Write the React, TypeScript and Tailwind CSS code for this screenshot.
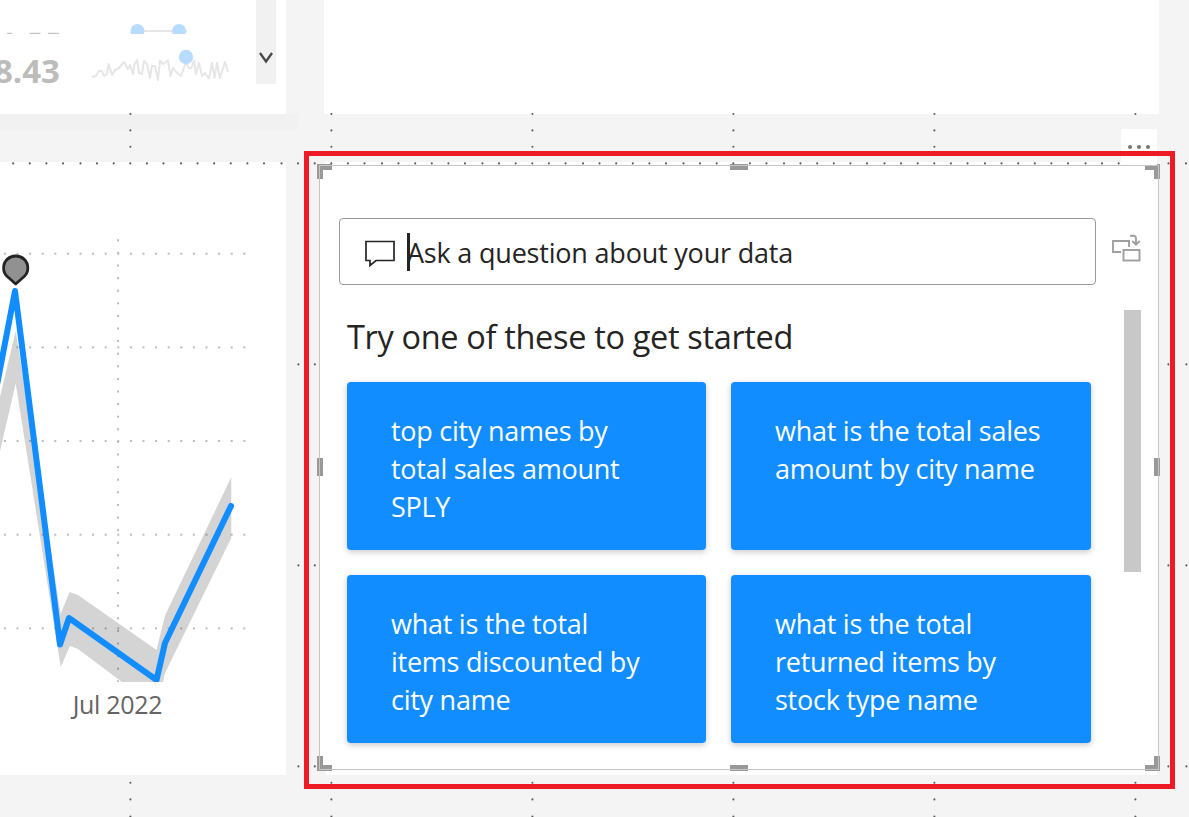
import React from "react";

const gridStops = [0, 16.5, 33.2, 49.8, 66.4, 83];
const guideXs: number[] = [];
for (let k = -1; k < 12; k++) {
  for (const s of gridStops) guideXs.push(80.5 + k * 100.5 + s);
}
const columnXs = [130.4, 331.4, 532.4, 733.4, 934.4, 1135.4];
const columnYs = [114, 130.4, 146.8, 782.8, 799.4, 816.6];
const rowYs = [364.4, 565.4, 766.4];
const rowXs = [298.4, 314.8, 1168.4, 1186.4];

function Dot({ x, y }: { x: number; y: number }) {
  return <circle cx={x} cy={y} r="1.05" fill="#5c5c5c" />;
}

function SnapGrid() {
  return (
    <svg className="pointer-events-none absolute inset-0" width="1189" height="817">
      {guideXs
        .filter((x) => x < 1125 || x > 1160)
        .map((x) => (
          <Dot key={x} x={x} y={163.4} />
        ))}
      {columnXs.map((x) => columnYs.map((y) => <Dot key={`${x}-${y}`} x={x} y={y} />))}
      {rowYs.map((y) => rowXs.map((x) => <Dot key={`${x}-${y}`} x={x} y={y} />))}
    </svg>
  );
}

function KpiCard() {
  return (
    <section className="flex h-[114px] w-[286px] justify-between overflow-hidden bg-white pr-[10px]">
      <div className="flex w-[60px] flex-col items-end">
        <svg className="h-[34px] w-[60px] shrink-0" viewBox="0 0 60 34" fill="#c4c3c2">
          <rect x="7" y="32.8" width="5" height="1.2" />
          <rect x="29.5" y="32.8" width="11" height="1.2" />
          <rect x="48" y="32.8" width="11" height="1.2" />
        </svg>
        <span className="mt-[13px] text-[33px] leading-[48px] font-bold text-[#bdbcbb]">8.43</span>
      </div>
      <svg className="h-[84px] w-[150px]" viewBox="83 0 150 84" fill="none">
        <clipPath id="row">
          <rect x="85" y="0" width="150" height="34" />
        </clipPath>
        <g clipPath="url(#row)">
          <path d="M137 31H187" stroke="#e6e6e6" strokeWidth="2" />
          <circle cx="137.5" cy="31" r="7" fill="#b8dcff" />
          <circle cx="179" cy="31" r="7" fill="#b8dcff" />
        </g>
        <path
          d="M92 77L96 76L99 71L102 71L104 76L107 74L108.500 64L112 75L115 70L117 69L119 68L124 62L128 69L130 65L133 74L134.500 64L137 60L139 73L142 74L144 61L147 64L150 78L152 66L155 66L158 80L160 60.500L163 64L168 60.500L170.500 76L173 68L177 73L181 76L186 62L189 68L191.500 68L194 61L196 74L199 63L202 76L205 73L209 78.500L212 63L214.500 78L217 63L220 78L225 62L228 72"
          stroke="#e6e6e6"
          strokeWidth="2"
          strokeLinejoin="round"
        />
        <circle cx="186" cy="57" r="7.200" fill="#b8dcff" />
      </svg>
      <div className="flex h-[84px] w-5 items-center justify-center bg-[#f1f1f1] pt-[31px]">
        <svg width="14" height="12" viewBox="0 0 14 12" fill="none">
          <path d="M1 1L7 9.500L13 1" stroke="#484848" strokeWidth="2.300" />
        </svg>
      </div>
    </section>
  );
}

const chartRows = [253.7, 347.4, 441, 534.7, 628.4];

function TrendChart() {
  return (
    <section className="flex h-[613px] w-[286px] flex-col bg-white">
      <svg className="h-[520px] w-[286px] shrink-0" viewBox="0 162 286 520" fill="none">
        {chartRows.map((y) =>
          Array.from({ length: 20 }, (_, i) => (
            <rect key={`${y}-${i}`} x={3.9 + i * 12.6} y={y - 1} width="2" height="2" fill="#bdbdbd" />
          )),
        )}
        {Array.from({ length: 36 }, (_, i) => (
          <rect key={i} x="117" y={239.3 + i * 12.6} width="2" height="2" fill="#bdbdbd" />
        ))}
        <path
          d="M-2 405L15.700 331L60.700 614L69.500 592L78 595L156.500 650L165 615.500L231.300 477V538L165 673L163 682H122L78 649L70 646L60.700 667L15.700 383.500L-2 460Z"
          fill="#000"
          fillOpacity="0.17"
        />
        <path
          d="M-8 411L15 291L60 644.500L69 618L156.500 680L165 643L231 506"
          stroke="#118dff"
          strokeWidth="6"
          strokeLinejoin="round"
          strokeLinecap="round"
        />
        <path
          d="M15.700 284L7 276.300C4.600 274 3.600 271.500 3.600 268C3.600 261 9 256 15.700 256S27.800 261 27.800 268C27.800 271.500 26.800 274 24.400 276.300Z"
          fill="#919191"
          stroke="#252423"
          strokeWidth="2.800"
          strokeLinejoin="round"
        />
      </svg>
      <span className="w-[235px] pt-[3px] text-center text-[25px] leading-[38px] tracking-[-0.3px] text-[#666463]">
        Jul 2022
      </span>
    </section>
  );
}

function CommentIcon() {
  return (
    <svg className="mt-[3px] h-[28px] w-[32px] shrink-0" viewBox="0 0 32 28" fill="none">
      <path d="M2 2.500H30V21.500H12L6 26.500V21.500H2Z" stroke="#252423" strokeWidth="1.700" />
    </svg>
  );
}

function ConvertIcon() {
  return (
    <svg className="mt-[16px] h-[28px] w-[30px]" viewBox="1112 234 30 28" fill="none" stroke="#a19f9d" strokeWidth="1.900">
      <path d="M1121 252H1113V241H1129V247" />
      <rect x="1123.500" y="250" width="16" height="10.500" />
      <path d="M1130 235.800H1133.500Q1136 235.800 1136 239V244.500M1132.300 241L1136 244.700L1139.700 241" />
    </svg>
  );
}

const suggestions = [
  ["top city names by", "total sales amount", "SPLY"],
  ["what is the total sales", "amount by city name"],
  ["what is the total", "items discounted by", "city name"],
  ["what is the total", "returned items by", "stock type name"],
];

function Suggestion({ lines }: { lines: string[] }) {
  return (
    <button className="flex h-[168px] flex-col items-start rounded-[4px] bg-[#118dff] pt-[30px] pl-11 text-left text-[27px] leading-[38px] tracking-[-0.26px] whitespace-nowrap text-white shadow-[0_2px_6px_rgba(0,0,0,0.22)]">
      {lines.map((line) => (
        <span key={line}>{line}</span>
      ))}
    </button>
  );
}

function SelectionHandles() {
  return (
    <svg className="pointer-events-none absolute -top-px -left-[2px]" width="843" height="607" fill="#999">
      <path d="M0 0H15V6H6V15H0Z" />
      <path d="M828 0H843V15H837V6H828Z" />
      <path d="M0 607V592H6V601H15V607Z" />
      <path d="M843 607V592H837V601H828V607Z" />
      <rect x="413" y="0" width="18" height="6" />
      <rect x="413" y="601" width="18" height="6" />
      <rect x="0" y="294" width="6" height="18" />
      <rect x="837" y="294" width="6" height="18" />
      <rect x="2.500" y="1.500" width="839" height="604" fill="none" stroke="#c6c6c6" />
    </svg>
  );
}

function QuestionVisual() {
  return (
    <section className="relative h-[605px] w-[840px] bg-white pt-[53px] pl-5">
      <div className="flex gap-4">
        <div className="flex h-[67px] w-[757px] items-center rounded-[4px] border border-[#9b9a99] pl-6">
          <CommentIcon />
          <span className="ml-[11px] h-[38px] w-[3px] shrink-0 bg-[#252423]" />
          <span className="-ml-[3px] pt-[3px] text-[27px] leading-[38px] tracking-[-0.2px] whitespace-nowrap text-[#252423]">
            Ask a question about your data
          </span>
        </div>
        <ConvertIcon />
      </div>
      <div className="flex pt-[25px] pl-2">
        <div className="w-[744px]">
          <h1 className="h-[72px] pt-[3px] text-[32.5px] leading-[48px] tracking-[-0.34px] whitespace-nowrap text-[#252423]">
            Try one of these to get started
          </h1>
          <div className="grid grid-cols-[359px_360px] gap-[25px]">
            {suggestions.map((lines) => (
              <Suggestion key={lines.join(" ")} lines={lines} />
            ))}
          </div>
        </div>
        <div className="ml-[33px] h-[262px] w-[17px] bg-[#c8c8c8]" />
      </div>
      <SelectionHandles />
    </section>
  );
}

export default function App() {
  return (
    <main className="relative flex h-[817px] w-[1189px] overflow-hidden bg-[#f4f4f4] font-['Open_Sans','Noto_Sans',sans-serif]">
      <div className="flex w-[319px] shrink-0 flex-col">
        <KpiCard />
        <div className="mb-8 h-4 w-[298px] bg-[#f1f1f1]" />
        <TrendChart />
      </div>
      <div className="flex w-[840px] shrink-0 flex-col">
        <div className="ml-[5px] h-[114px] w-[835px] bg-white" />
        <div className="mt-12 ml-[6px] h-[3px] w-[832px] bg-white" />
        <QuestionVisual />
        <div className="ml-[7px] h-[5px] w-[831px] bg-white" />
      </div>
      <SnapGrid />
      <div className="absolute top-[129px] left-[1121px] flex h-[36px] w-[36px] items-center justify-center gap-[5px] bg-white">
        <span className="size-1 rounded-full bg-[#777]" />
        <span className="size-1 rounded-full bg-[#777]" />
        <span className="size-1 rounded-full bg-[#777]" />
      </div>
      <div className="pointer-events-none absolute top-[151px] left-[304px] h-[638px] w-[871px] border-[5px] border-[#ed1c24]" />
    </main>
  );
}
